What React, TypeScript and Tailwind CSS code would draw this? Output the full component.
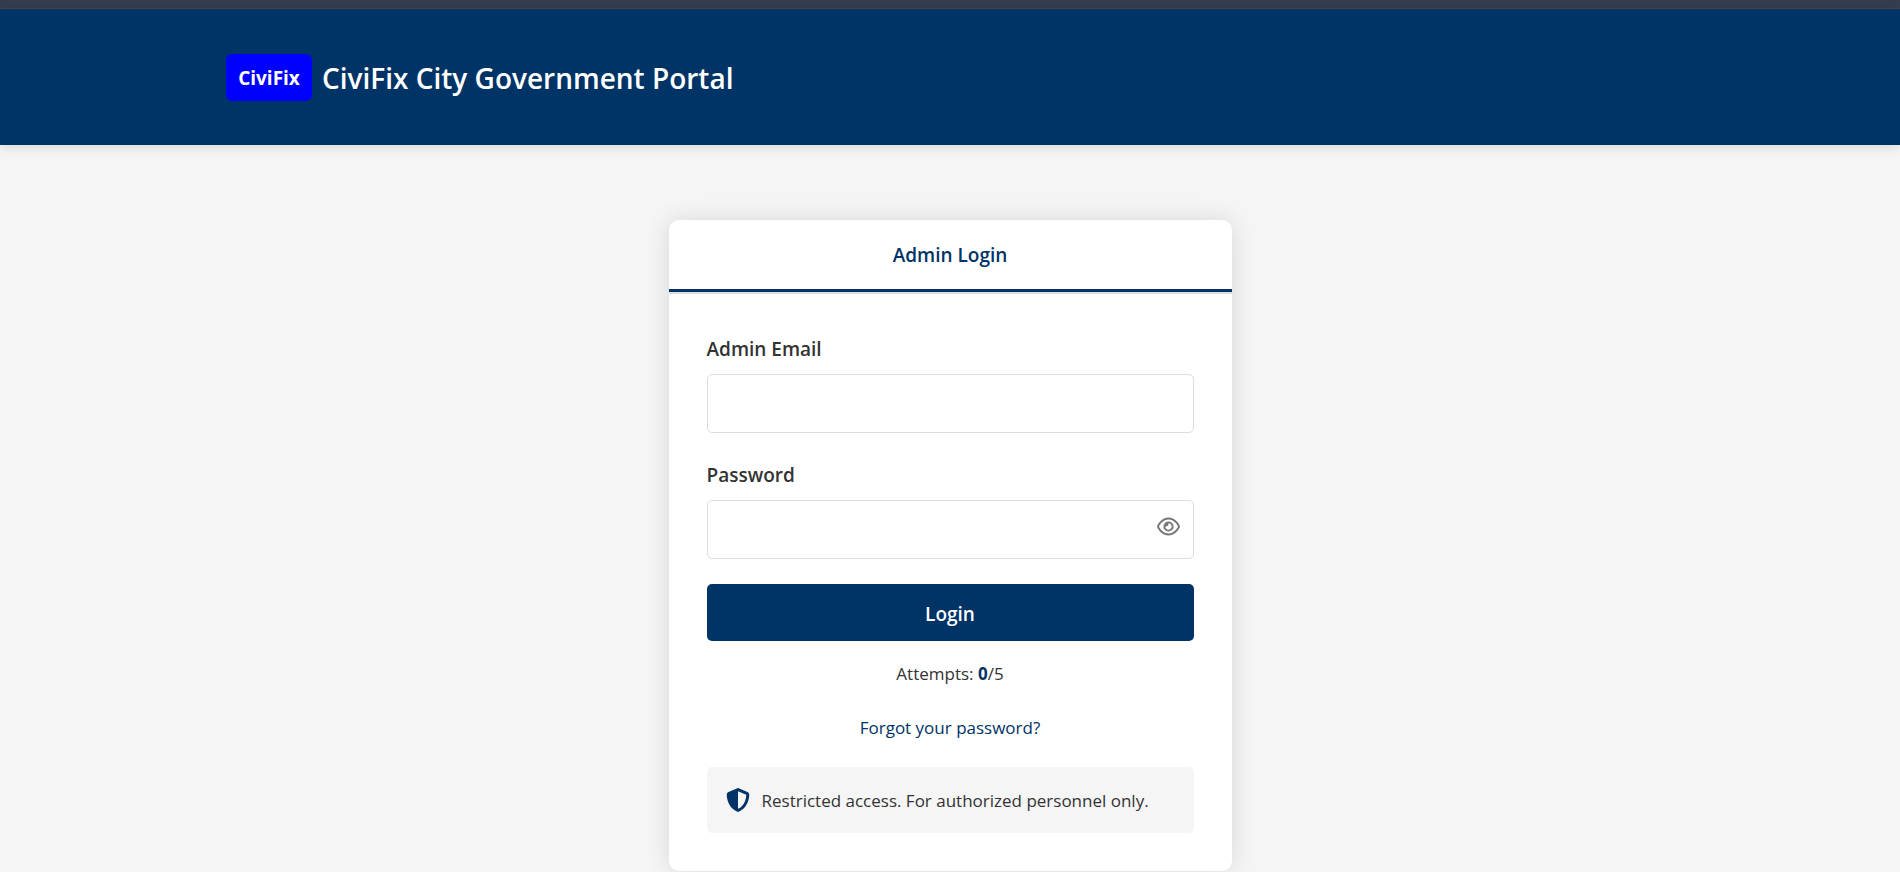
import { useState } from "react";
import { FaRegEye, FaShieldHalved } from "react-icons/fa6";

const inputClass =
  "block h-[59px] w-full rounded-[5px] border border-[#dddddd] bg-white px-4 text-lg text-[#333333] outline-none focus:border-[#003366]";
const labelClass = "mb-2 block text-[19px] leading-[34px] font-semibold text-[#333333]";

function Header() {
  return (
    <header className="bg-[#003366] px-6 shadow-[0_2px_12px_rgba(0,0,0,0.12)]">
      <div className="mx-auto flex h-[136px] max-w-[1448px] items-center gap-[10px]">
        <span className="flex h-[47px] w-[86px] items-center justify-center rounded-md bg-[#0000ff] pt-0.5 text-[19px] font-bold text-white">
          CiviFix
        </span>
        <h1 className="pt-0.5 text-[28px] leading-10 font-semibold text-white">
          CiviFix City Government Portal
        </h1>
      </div>
    </header>
  );
}

function LoginCard() {
  const [visible, setVisible] = useState(false);
  return (
    <section className="w-full max-w-[563px] overflow-hidden rounded-[10px] bg-white shadow-[0_0_24px_rgba(0,0,0,0.12)]">
      <div role="tablist" className="flex border-b-2 border-[#dddddd]">
        <button
          type="button"
          role="tab"
          aria-selected="true"
          className="h-[72px] flex-1 border-b-[3px] border-[#003366] pt-0.5 text-[19px] font-semibold text-[#003366]"
        >
          Admin Login
        </button>
      </div>
      <form className="p-[38px]" onSubmit={(e) => e.preventDefault()}>
        <div className="mb-[25px]">
          <label htmlFor="email" className={labelClass}>
            Admin Email
          </label>
          <input id="email" type="email" className={inputClass} />
        </div>
        <div className="mb-[25px]">
          <label htmlFor="password" className={labelClass}>
            Password
          </label>
          <div className="relative">
            <input
              id="password"
              type={visible ? "text" : "password"}
              className={inputClass}
            />
            <button
              type="button"
              aria-label="Show password"
              onClick={() => setVisible(!visible)}
              className="absolute top-[15px] right-[14px] text-[#777777]"
            >
              <FaRegEye size={23} />
            </button>
          </div>
        </div>
        <button
          type="submit"
          className="block h-[57px] w-full rounded-[5px] bg-[#003366] pt-1 text-[19px] font-semibold text-white"
        >
          Login
        </button>
        <p className="mt-[19px] text-center text-[17px] leading-7 text-[#333333]">
          Attempts: <strong className="font-bold text-[#003366]">0</strong>/5
        </p>
        <p className="mt-[26px] text-center text-[17px] leading-7">
          <a href="#forgot" className="text-[#003366]">
            Forgot your password?
          </a>
        </p>
        <div className="mt-[25px] flex h-[66px] items-center gap-3 rounded-[5px] bg-[#f5f5f5] px-[19px] text-[17px] text-[#333333]">
          <FaShieldHalved size={24} className="shrink-0 text-[#003366]" />
          <span className="pt-0.5">Restricted access. For authorized personnel only.</span>
        </div>
      </form>
    </section>
  );
}

export default function App() {
  return (
    <div className="min-h-screen bg-[#f5f5f5] font-['Open_Sans','Noto_Sans',sans-serif]">
      <div className="h-[9px] border-b border-[#44464a] bg-[#353d4f]" />
      <Header />
      <main className="flex justify-center px-4 pt-[75px]">
        <LoginCard />
      </main>
    </div>
  );
}
